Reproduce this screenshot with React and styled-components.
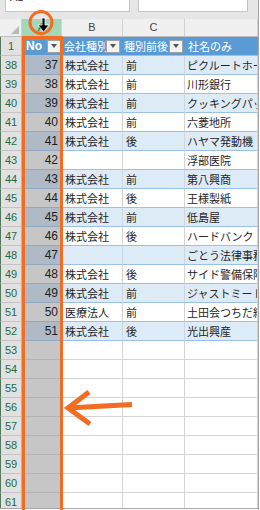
import React from 'react';
import styled, { createGlobalStyle } from 'styled-components';

const Global = createGlobalStyle`
  html, body { margin: 0; padding: 0; background: #ffffff; }
  body {
    width: 260px; height: 510px; overflow: hidden;
    font-family: "Liberation Sans", "Noto Sans CJK JP", sans-serif;
  }
  * { box-sizing: border-box; }
`;

const ORANGE = '#f26c22';
const JP = '"Noto Sans CJK JP", "Liberation Sans", sans-serif';

const Frame = styled.div`
  position: relative;
  width: 259px;
  height: 510px;
  overflow: hidden;
  display: flex;
  flex-direction: column;
  border-right: 1px solid #a6a6a6;
  background: #e8e8e8;
`;

const Toolbar = styled.div`
  flex: none;
  height: 19px;
  display: flex;
  align-items: flex-start;
  gap: 8px;
  padding-left: 5px;
  background: #e6e6e6;
`;

const NameBox = styled.div`
  width: 125px;
  height: 12px;
  background: #fff;
  border: 1px solid #c6c6c6;
  border-top: none;
  overflow: hidden;
  display: flex;
  font-size: 11px;
  color: #333;
  padding-left: 4px;
`;

const NameText = styled.span`
  line-height: 11px;
  margin-top: -8px;
`;

const FormulaBox = styled.div`
  width: 110px;
  height: 12px;
  background: #fff;
  border: 1px solid #c6c6c6;
  border-top: none;
`;

const Sheet = styled.div`
  flex: 1;
  min-height: 0;
  overflow: hidden;
  background: #fff;
`;

const Row = styled.div`
  display: grid;
  grid-template-columns: 22px 40px 61px 62px 73px;
  height: ${p => p.$h}px;
`;

const Corner = styled.div`
  position: relative;
  background: #f0f0f0;
  border-right: 1px solid #cfcfcf;
  border-bottom: 1px solid #bdbdbd;
  &::after {
    content: '';
    position: absolute;
    right: 2px;
    bottom: 2px;
    width: 0;
    height: 0;
    border-left: 8px solid transparent;
    border-bottom: 8px solid #b9b9b9;
  }
`;

const ColHeader = styled.div`
  background: ${p => (p.$selected ? '#a3d7b8' : '#f0f0f0')};
  color: ${p => (p.$selected ? '#1e6e42' : '#444')};
  border-right: 1px solid #d2d2d2;
  border-bottom: 1px solid #bdbdbd;
  font-size: 11px;
  line-height: 17px;
  text-align: center;
`;

const RowHeader = styled.div`
  background: #e1e1e1;
  color: #1f6b45;
  border-left: 1px solid #54775f;
  border-right: 1px solid #b5b5b5;
  border-bottom: 1px solid #c4c4c4;
  font-size: 11px;
  line-height: 18px;
  text-align: center;
`;

const HeadCell = styled.div`
  display: flex;
  align-items: center;
  background: #5b9bd5;
  color: #fff;
  border-bottom: 1px solid #9bc2e6;
  padding-left: ${p => p.$pad}px;
  padding-right: ${p => p.$padR}px;
  overflow: hidden;
`;

const HeadLabel = styled.span`
  flex: 1;
  min-width: 0;
  overflow: hidden;
  white-space: nowrap;
  font-family: ${p => (p.$latin ? '"Liberation Sans", sans-serif' : JP)};
  font-weight: ${p => (p.$latin ? 700 : 400)};
  font-size: ${p => (p.$latin ? 12 : 11)}px;
  line-height: 18px;
`;

const FilterButton = styled.span`
  flex: none;
  width: 14px;
  height: 13px;
  background: #f3f3f3;
  border: 1px solid #a3a3a3;
  display: flex;
  align-items: center;
  justify-content: center;
  &::before {
    content: '';
    width: 0;
    height: 0;
    border-left: 3px solid transparent;
    border-right: 3px solid transparent;
    border-top: 4px solid #555;
  }
`;

const NoCell = styled.div`
  background: ${p => (p.$band ? '#afbac6' : '#c6c6c6')};
  border-bottom: 1px solid ${p => (p.$inTable ? '#8fa9c2' : '#b3b3b3')};
  color: #1e1e1e;
  font-size: 12px;
  line-height: 18px;
  text-align: right;
  padding-right: 4px;
`;

const DataCell = styled.div`
  background: ${p => (p.$band ? '#ddebf7' : '#fff')};
  border-right: 1px solid ${p => (p.$band ? '#cdd7e1' : '#d4d4d4')};
  border-bottom: 1px solid ${p => (p.$inTable ? '#9bc2e6' : '#d4d4d4')};
  font-family: ${JP};
  font-size: 11px;
  line-height: 18px;
  color: #262626;
  padding-left: ${p => p.$pad}px;
  white-space: nowrap;
  overflow: hidden;
`;

const Footer = styled.div`
  flex: none;
  height: 2px;
  border-top: 1px solid #a6a6a6;
  background: #fff;
`;

const SelectionOutline = styled.div`
  position: absolute;
  left: 22px;
  top: 36px;
  width: 41px;
  bottom: -10px;
  border: 3px solid ${ORANGE};
  border-bottom: none;
  pointer-events: none;
`;

const Marks = styled.svg`
  position: absolute;
  left: 0;
  top: 0;
  pointer-events: none;
`;

const tableRows = [
  [38, 37, '株式会社', '前', 'ピクルートホールディングス'],
  [39, 38, '株式会社', '前', '川形銀行'],
  [40, 39, '株式会社', '前', 'クッキングパッド'],
  [41, 40, '株式会社', '前', '六菱地所'],
  [42, 41, '株式会社', '後', 'ハヤマ発動機'],
  [43, 42, '', '', '浮部医院'],
  [44, 43, '株式会社', '前', '第八興商'],
  [45, 44, '株式会社', '後', '王様製紙'],
  [46, 45, '株式会社', '前', '低島屋'],
  [47, 46, '株式会社', '後', 'ハードバンク・グループ'],
  [48, 47, '', '', 'ごとう法律事務所'],
  [49, 48, '株式会社', '後', 'サイド警備保障'],
  [50, 49, '株式会社', '前', 'ジャストミート'],
  [51, 50, '医療法人', '前', '土田会つちだ総合病院'],
  [52, 51, '株式会社', '後', '光出興産'],
];

const emptyRows = [53, 54, 55, 56, 57, 58, 59, 60, 61];

export default function App() {
  return (
    <>
      <Global />
      <Frame>
        <Toolbar>
          <NameBox>
            <NameText>A1</NameText>
          </NameBox>
          <FormulaBox />
        </Toolbar>
        <Sheet>
          <Row $h={18}>
            <Corner />
            <ColHeader $selected>A</ColHeader>
            <ColHeader>B</ColHeader>
            <ColHeader>C</ColHeader>
            <ColHeader />
          </Row>
          <Row $h={19}>
            <RowHeader>1</RowHeader>
            <HeadCell $pad={4} $padR={1}>
              <HeadLabel $latin>No</HeadLabel>
              <FilterButton />
            </HeadCell>
            <HeadCell $pad={2} $padR={3}>
              <HeadLabel>会社種別</HeadLabel>
              <FilterButton />
            </HeadCell>
            <HeadCell $pad={1} $padR={2}>
              <HeadLabel>種別前後</HeadLabel>
              <FilterButton />
            </HeadCell>
            <HeadCell $pad={3} $padR={0}>
              <HeadLabel>社名のみ</HeadLabel>
            </HeadCell>
          </Row>
          {tableRows.map(([r, no, kind, pos, name], i) => {
            const band = i % 2 === 0;
            return (
              <Row $h={19} key={r}>
                <RowHeader>{r}</RowHeader>
                <NoCell $band={band} $inTable>{no}</NoCell>
                <DataCell $band={band} $inTable $pad={3}>{kind}</DataCell>
                <DataCell $band={band} $inTable $pad={3}>{pos}</DataCell>
                <DataCell $band={band} $inTable $pad={2}>{name}</DataCell>
              </Row>
            );
          })}
          {emptyRows.map(r => (
            <Row $h={19} key={r}>
              <RowHeader>{r}</RowHeader>
              <NoCell />
              <DataCell $pad={3} />
              <DataCell $pad={3} />
              <DataCell $pad={2} />
            </Row>
          ))}
        </Sheet>
        <Footer />
        <SelectionOutline />
        <Marks width="260" height="510" viewBox="0 0 260 510">
          <circle cx="41" cy="22.5" r="11" fill="none" stroke={ORANGE} strokeWidth="3" />
          <path
            d="M42 18 H45 V25 H49 L43.5 32 L38 25 H42 Z"
            fill="#000"
            stroke="#fff"
            strokeWidth="0.8"
            strokeLinejoin="round"
          />
          <polyline
            points="89,392 68,408 90,424"
            fill="none"
            stroke={ORANGE}
            strokeWidth="5"
            strokeLinejoin="miter"
          />
          <line x1="68" y1="408" x2="132" y2="404.5" stroke={ORANGE} strokeWidth="5" />
        </Marks>
      </Frame>
    </>
  );
}
